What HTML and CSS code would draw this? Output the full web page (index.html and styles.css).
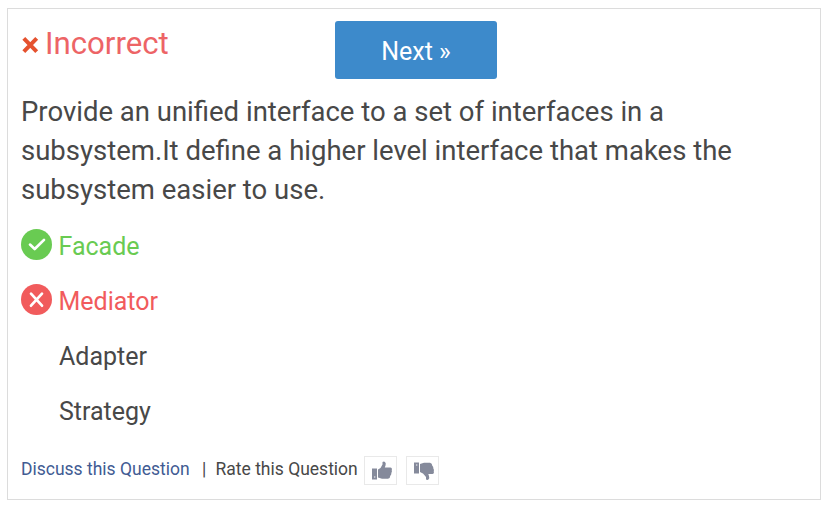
FILE: index.html
```html
<!DOCTYPE html>
<html lang="en">
<head>
<meta charset="utf-8">
<title>Quiz question</title>
<link rel="stylesheet" href="styles.css">
</head>
<body>
<main class="card">
  <header class="top">
    <div class="result">
      <svg class="cross" viewBox="0 0 20 20"><path d="M2.8 3.3L15.7 16.7M15.7 3.3L2.8 16.7"/></svg>
      <span class="verdict">Incorrect</span>
    </div>
    <a class="next">Next »</a>
  </header>
  <p class="question">Provide an unified interface to a set of interfaces in a<br>subsystem.It define a higher level interface that makes the<br>subsystem easier to use.</p>
  <ul class="options">
    <li class="option right">
      <svg class="mark" viewBox="0 0 31 31"><circle cx="15.5" cy="15.5" r="15.5"/><path d="M9 15.6L13.7 20L23 10.9"/></svg>
      <span>Facade</span>
    </li>
    <li class="option wrong">
      <svg class="mark" viewBox="0 0 31 31"><circle cx="15.5" cy="15.5" r="15.5"/><path d="M10 9.7L21 21.7M21 9.7L10 21.7"/></svg>
      <span>Mediator</span>
    </li>
    <li class="option"><i class="mark"></i><span>Adapter</span></li>
    <li class="option"><i class="mark"></i><span>Strategy</span></li>
  </ul>
  <footer class="foot">
    <a class="discuss">Discuss this Question</a>
    <span class="bar">|</span>
    <span class="rate">Rate this Question</span>
    <button class="vote" aria-label="Like">
      <svg viewBox="0 0 20 19"><path d="M0 7.5H5V18.5H0ZM6 8.5L8.5 7L10.5 3.5V1Q12.8-.3 13.7 2.2Q13.9 4 12.8 6.5H18.5Q20.5 7 19.7 9.2Q20.3 10.5 19.3 11.9Q19.6 13.5 18.3 14.8Q18.2 17.5 16 17.8H10L6 16.5Z"/><circle class="dot" cx="2.7" cy="16" r=".8"/></svg>
    </button>
    <button class="vote down" aria-label="Dislike">
      <svg viewBox="0 0 20 19"><path d="M0 .5H5V11.5H0ZM6 2L10 .7H16Q18.2 1 18.3 3.7Q19.6 5 19.3 6.6Q20.3 8 19.7 9.3Q20.5 11.5 18.5 12H14.3Q15.4 14.5 15.2 16.3Q14.3 18.8 12 17.5V15L9 11.5L6 10Z"/><circle class="dot" cx="2.7" cy="3" r=".8"/></svg>
    </button>
  </footer>
</main>
</body>
</html>
```

FILE: styles.css
```css
* { box-sizing: border-box; }
body {
  margin: 0;
  padding: 8px 8px 7px 7px;
  background: #fff;
  color: #484848;
  font-family: Roboto, sans-serif;
}
.card {
  height: 492px;
  border: 1px solid #dcdcdc;
  padding: 12px 13px;
}
.top { display: flex; height: 58px; }
.result {
  display: flex;
  width: 314px;
  height: 44px;
  align-items: center;
  color: #ed6466;
}
.cross {
  width: 20px;
  height: 20px;
  margin: 4px 4px 0 0;
  fill: none;
  stroke: #e5522f;
  stroke-width: 4;
}
.verdict { padding-top: 2px; font-size: 31.2px; line-height: 44px; }
.next {
  width: 162px;
  height: 58px;
  padding-top: 2px;
  border-radius: 3px;
  background: #3d8acb;
  color: #fff;
  font-size: 25px;
  line-height: 58px;
  text-align: center;
}
.question {
  margin: 13px 0 0;
  font-size: 27.5px;
  line-height: 39px;
  white-space: nowrap;
}
.options { list-style: none; margin: 8px 0 0; padding: 0; }
.option {
  display: flex;
  height: 55px;
  align-items: center;
  font-size: 25px;
}
.option span { padding-top: 4px; }
.mark { width: 31px; height: 31px; margin-right: 7px; }
.mark path {
  fill: none;
  stroke: #fff;
  stroke-width: 2.7;
  stroke-linecap: round;
  stroke-linejoin: round;
}
.right .mark, .wrong .mark { margin-right: 6.5px; }
.right { color: #69cb52; }
.right circle { fill: #69cb52; }
.wrong { color: #f15b5c; }
.wrong circle { fill: #f15b5c; }
.foot {
  display: flex;
  align-items: center;
  height: 29px;
  margin-top: 19px;
  font-size: 17.5px;
  line-height: 25px;
  white-space: nowrap;
}
.foot a, .foot span { padding-bottom: 2px; }
.discuss { width: 181px; color: #415b93; }
.bar { width: 13.5px; }
.rate { width: 148.5px; }
.vote {
  display: flex;
  width: 33px;
  height: 29px;
  margin-right: 9px;
  padding: 0 0 0 7px;
  align-items: center;
  border: 1px solid #e9e9e9;
  background: #fff;
}
.vote svg { width: 20px; height: 19px; margin-bottom: 1px; fill: #858a9b; }
.vote.down svg { margin: 2px 0 0; }
.vote .dot { fill: #e2e3e8; }
```
